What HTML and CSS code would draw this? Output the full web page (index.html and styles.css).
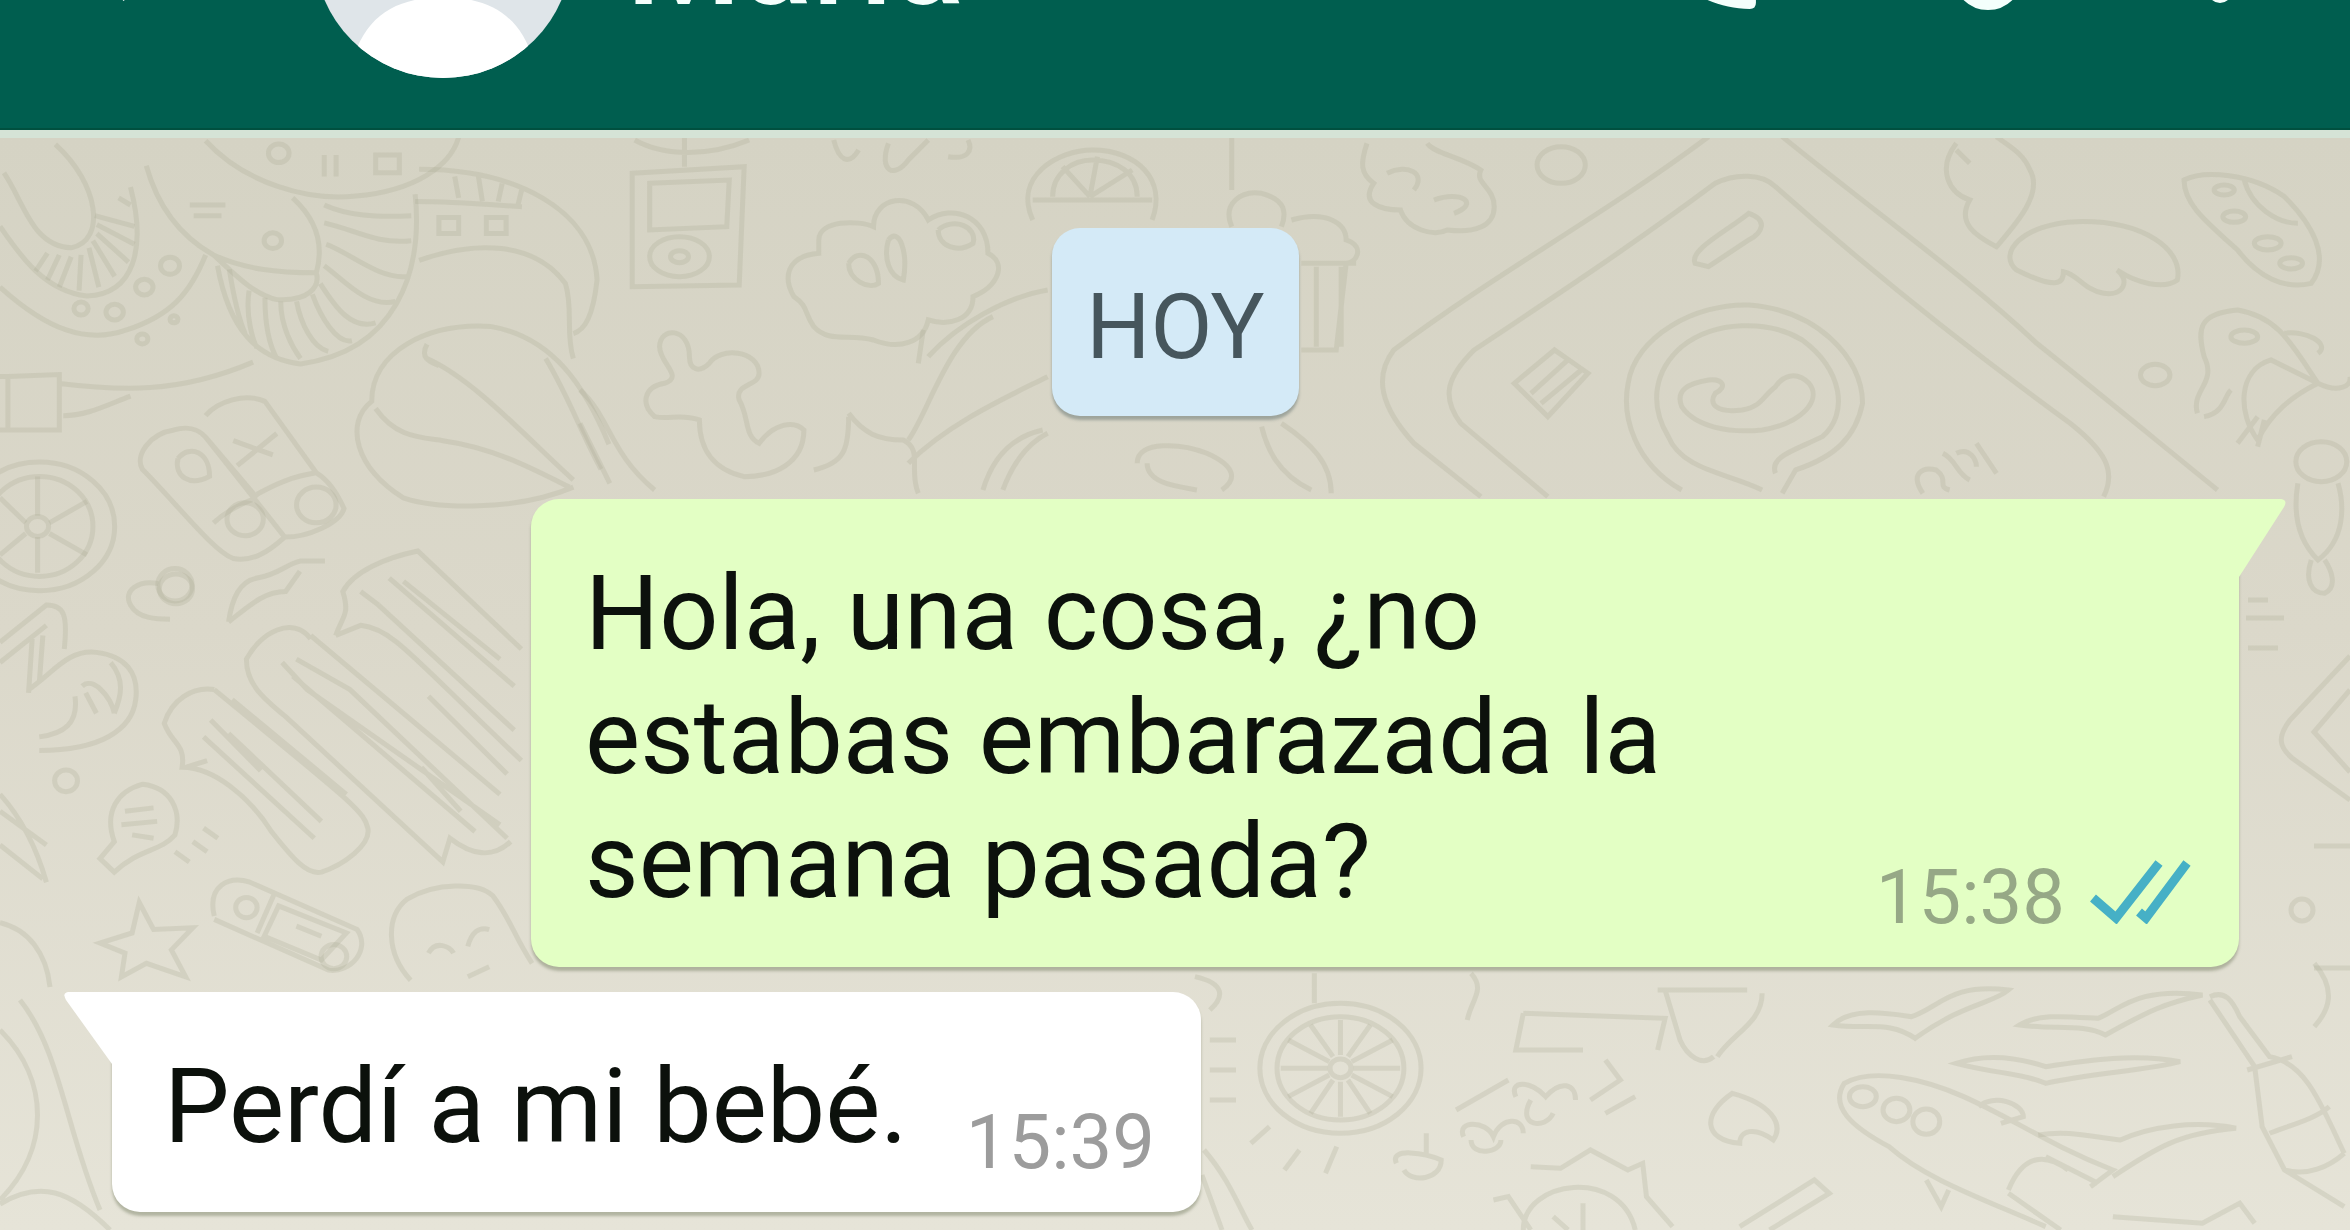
FILE: index.html
```html
<!DOCTYPE html>
<html lang="es">
<head>
<meta charset="utf-8">
<title>María</title>
<meta name="viewport" content="width=device-width, initial-scale=1">
<link rel="stylesheet" href="styles.css">
</head>
<body>
<header class="bar">
  <button class="icon-button back" aria-label="Atrás">
    <svg width="120" height="112" viewBox="0 0 120 112"><path d="M112 56H16M60 8L16 56L60 104" fill="none" stroke="currentColor" stroke-width="12"/></svg>
  </button>
  <svg class="avatar" viewBox="0 0 262 262" aria-hidden="true">
    <defs><clipPath id="round"><circle cx="131" cy="131" r="131"/></clipPath></defs>
    <g clip-path="url(#round)">
      <rect width="262" height="262" fill="#dfe5e9"/>
      <circle cx="131" cy="106" r="52" fill="#fff"/>
      <path d="M36 262C44 204 78 180 131 180S218 204 226 262Z" fill="#fff"/>
    </g>
  </svg>
  <h1 class="name">María</h1>
  <button class="icon-button call" aria-label="Llamar">
    <svg width="124" height="124" viewBox="0 0 120 120"><path d="M24 4H44Q50 4 51 10Q52 24 56 36Q58 42 54 46L42 58Q52 78 70 84L80 72Q84 68 90 70Q101 74 112 75Q118 76 118 82V112Q118 118 112 118C54 118 2 66 2 10Q2 4 8 4Z" fill="currentColor"/></svg>
  </button>
  <button class="icon-button attach" aria-label="Adjuntar">
    <svg width="84" height="128" viewBox="0 0 84 128"><path d="M70 34V90a28 28 0 0 1-56 0V28a20 20 0 0 1 40 0V84a12 12 0 0 1-24 0V34" fill="none" stroke="currentColor" stroke-width="14"/></svg>
  </button>
  <button class="icon-button more" aria-label="Más opciones">
    <svg width="32" height="120" viewBox="0 0 32 120"><g fill="currentColor"><circle cx="16" cy="18" r="12"/><circle cx="16" cy="60" r="12"/><circle cx="16" cy="102" r="12"/></g></svg>
  </button>
</header>
<main class="chat">
  <svg class="doodles" viewBox="0 138 2350 1092" preserveAspectRatio="xMidYMin slice" aria-hidden="true">
    <!-- shell, octopus, cards, balloon -->
    <g transform="translate(0 130) scale(.3954 .3571)">
      <path d="M10 120C60 200 80 325 180 330C270 310 250 150 140 40M330 160C370 330 340 460 220 465C110 450 50 350 0 270M0 440C120 560 220 600 320 560C430 520 480 460 520 350"/>
      <path d="M120 345L90 395M150 350L120 420M180 355L150 440M205 350L200 450M225 330L250 440M235 310L290 410M245 290L325 370M245 265L340 320M240 240L340 270M300 190L330 210"/>
      <circle cx="430" cy="380" r="24"/><circle cx="365" cy="440" r="22"/><circle cx="290" cy="510" r="22"/><circle cx="205" cy="500" r="18"/><circle cx="440" cy="530" r="10"/><circle cx="360" cy="585" r="14"/>
      <path d="M370 100C400 220 460 300 540 350M520 30C620 150 780 200 900 185C1050 170 1140 100 1160 20M740 190C800 250 820 320 800 400C810 440 780 480 700 475C640 460 590 400 540 350C620 390 700 400 800 400"/>
      <path d="M1050 180C1070 400 1000 620 760 655C650 640 580 560 550 380M820 210C880 240 950 245 1040 240M820 260C900 280 950 320 1040 310M825 320C880 340 960 420 1030 410M820 380C870 420 930 500 1000 480M810 430C850 500 890 560 950 540M790 460C810 520 850 600 890 590M750 480C760 540 790 610 830 620M710 480C710 550 740 610 760 640M670 470C670 540 680 600 700 640M630 450C620 520 640 590 650 610M580 390C590 460 600 520 620 570M480 210H570M490 240H560"/>
      <circle cx="705" cy="65" r="26"/><circle cx="690" cy="310" r="22"/><path d="M820 70V130M850 70V130M950 70H1010V120H950Z"/>
      <path d="M1060 110C1300 110 1500 220 1510 420C1500 520 1480 560 1450 570M1060 365C1200 310 1350 310 1430 430C1450 500 1430 570 1450 640M1150 130L1160 190M1210 130L1220 200M1270 150L1260 200M1320 165L1310 210M1050 200C1150 200 1250 210 1320 215"/>
      <rect x="1110" y="245" width="50" height="45"/><rect x="1230" y="245" width="50" height="45"/>
      <path d="M0 690H20V840H0M20 690L150 685V840H20M150 710C300 730 450 740 640 650M160 800C220 800 270 770 330 745"/>
      <path d="M520 800C550 760 620 735 670 760L800 960C830 980 850 1010 870 1060C860 1100 780 1140 720 1140C680 1180 640 1210 590 1200C540 1180 450 1050 360 950C340 910 380 850 440 840C470 830 500 835 520 860L720 1140M520 860L650 1030M650 1020C700 990 740 970 800 960M540 1100C570 1070 600 1050 650 1030M590 870L690 910M600 940L700 850"/><circle cx="620" cy="1090" r="46"/><circle cx="800" cy="1050" r="50"/><path d="M450 920C480 880 530 900 530 970C480 1000 440 970 450 920"/>
      <path d="M1450 1000C1300 1070 1100 1060 1020 1030C900 950 870 820 940 760C940 620 1080 540 1240 550C1400 580 1480 720 1540 880M1080 640C1200 700 1330 860 1450 980M950 780C1000 860 1060 860 1120 870C1250 890 1350 950 1440 1000M1380 640C1440 750 1470 850 1520 950M1080 600C1060 640 1090 650 1110 660"/>
      <ellipse cx="100" cy="1110" rx="190" ry="180"/><ellipse cx="100" cy="1110" rx="135" ry="140"/><circle cx="95" cy="1110" r="28"/><path d="M95 1080V970M125 1100L220 1040M125 1130L220 1190M95 1140V1240M65 1100L0 1030M65 1130L0 1190"/>
      <circle cx="445" cy="1285" r="42"/><path d="M400 1270C350 1260 310 1290 330 1330C350 1370 400 1370 430 1370"/>
    </g>
    <!-- photo, bubbles, cactus, cupcake -->
    <g transform="translate(580 130) scale(.4975 .3333)">
      <path d="M110 30C170 80 260 80 340 30M210 20V110M105 130L330 110L320 465L105 470ZM140 160L300 150L295 290L140 300Z"/><circle cx="200" cy="380" r="60"/><circle cx="200" cy="380" r="18"/>
      <path d="M510 30C520 90 540 110 560 60M620 40C600 120 630 150 660 90L700 30M740 80C780 90 790 60 780 30"/>
      <path d="M480 330C480 270 560 270 590 290C590 200 670 180 700 270C750 220 820 260 820 370C860 400 840 470 790 500C790 570 740 590 700 570C690 640 640 660 590 630C540 610 500 640 470 590C450 550 460 530 430 500C410 450 410 380 480 370ZM540 400C560 350 600 380 600 460C580 480 540 450 540 400M620 330C640 290 660 360 650 450C620 440 610 380 620 330M720 300C750 260 800 290 790 340C760 370 720 350 720 300"/>
      <path d="M910 270C870 140 960 60 1030 60C1120 60 1180 150 1150 270M950 200C950 130 990 90 1030 90C1080 90 1120 130 1120 200M910 210H1150M1025 200L970 110M1025 200L1040 80M1025 200L1110 120"/>
      <path d="M1310 20V180M1310 290C1290 220 1330 180 1370 190C1420 210 1420 250 1410 290M1430 270C1500 240 1540 280 1540 330C1580 350 1560 400 1540 400L1520 660H1450M1450 400H1560M1480 410V650M1530 410V650"/>
      <path d="M160 650C160 590 220 590 220 680C220 720 240 730 260 700C280 650 360 660 360 730C360 770 310 760 320 810C340 860 330 920 360 940C390 880 430 870 450 900C450 1000 390 1040 330 1040C270 1020 240 960 240 870C200 850 180 870 150 860C120 820 130 770 170 760C210 740 160 700 160 650Z"/>
      <path d="M700 680C760 580 860 500 940 480M660 930C700 850 740 620 830 560M660 1000C740 880 860 800 940 740M690 600L680 700M540 860C540 960 530 1000 470 1020M540 850C570 910 600 930 650 930C690 960 660 1020 680 1090M0 780C60 860 60 970 150 1080M0 880L60 1060"/>
      <path d="M810 1080C830 980 870 920 930 900M850 1080C870 1000 900 940 940 910M1120 1000C1120 930 1210 940 1260 970C1320 1010 1320 1050 1290 1080M1140 1000C1140 1060 1200 1070 1240 1080M1370 890C1380 950 1400 1030 1470 1080M1410 880C1470 940 1510 1000 1510 1090"/>
    </g>
    <!-- phone, clouds, rocket -->
    <g transform="translate(1300 130) scale(.6697 .3333)">
      <path d="M100 40C90 100 90 130 110 160C90 220 120 240 150 240C160 300 200 320 220 300C260 310 290 290 290 230C290 170 260 160 270 120C240 80 200 70 190 40M130 130C160 100 190 130 170 180M200 210C240 180 270 220 230 250"/><ellipse cx="390" cy="105" rx="36" ry="55"/>
      <path d="M610 20C450 260 300 420 140 660C110 740 120 830 170 940L270 1100M720 20C880 280 1000 450 1100 640C1200 800 1290 950 1370 1080M370 1100L240 880C210 800 220 740 260 660C380 500 500 340 620 160C650 130 690 130 710 170C850 420 1000 660 1150 880C1200 960 1220 1020 1200 1100"/>
      <path d="M590 400C580 360 640 300 670 250C700 270 690 310 670 330L610 410ZM320 760L380 660L430 730L370 860ZM345 790L400 690M360 820L420 720"/>
      <path d="M570 1080C500 1000 480 860 490 760C500 620 590 520 670 525C770 540 840 680 840 820C830 920 800 980 740 1020L720 1090M690 1080C640 1030 570 1020 550 920C520 820 530 720 570 650C620 570 700 570 750 630C810 720 820 850 780 920C740 960 700 980 710 1030"/>
      <path d="M610 750C580 760 560 780 570 830C590 890 640 910 690 900C750 880 780 810 760 760C740 720 720 740 710 770C690 800 690 830 660 840C620 850 610 820 620 790C640 770 630 745 610 750Z"/>
      <path d="M930 1090C910 1030 930 1010 950 1020C970 1050 950 1070 970 1080M960 970C980 990 980 1030 1000 1050M980 970C1000 950 1010 990 1010 1010M1010 940L1040 1030"/>
      <path d="M980 40C950 120 970 190 1000 210C980 280 1010 320 1040 350C1070 280 1110 190 1090 120C1080 70 1060 50 1040 20M980 60L1000 100M1070 420C1040 370 1080 280 1160 275C1260 270 1320 360 1310 450C1290 480 1250 460 1220 420C1240 450 1230 500 1200 490C1170 480 1160 430 1140 425C1140 460 1130 480 1070 420Z"/>
      <path d="M1320 150C1350 120 1420 130 1470 200C1510 280 1540 380 1510 460C1470 480 1430 440 1400 360C1350 270 1320 220 1320 150ZM1410 150C1420 230 1460 280 1490 280"/><circle cx="1380" cy="180" r="15"/><circle cx="1395" cy="260" r="17"/><circle cx="1445" cy="340" r="20"/><circle cx="1480" cy="400" r="17"/>
      <path d="M1340 850C1330 780 1370 760 1350 680C1340 600 1340 550 1400 540C1460 560 1480 640 1520 760C1480 800 1450 850 1430 930C1400 850 1400 720 1450 690L1520 760M1350 860C1380 850 1380 800 1390 780M1470 610C1500 600 1540 640 1520 670M1520 760C1550 790 1570 770 1568 740M1430 860L1400 940M1440 870L1430 950"/><circle cx="1410" cy="620" r="20"/><ellipse cx="1277" cy="735" rx="22" ry="32"/>
      <ellipse cx="1525" cy="995" rx="38" ry="60"/><path d="M1490 1060C1480 1180 1500 1250 1520 1290C1560 1230 1560 1130 1550 1060M1510 1290C1500 1350 1510 1390 1530 1390C1550 1370 1540 1320 1530 1290"/>
    </g>
    <!-- gloves, star, tags -->
    <g transform="translate(0 480) scale(.3571 .338)">
      <path d="M0 480L130 370C180 370 190 400 180 500M0 540L130 430M90 470L80 630M120 460L110 600M80 620C150 570 190 500 270 510C350 520 390 570 380 650C370 740 280 800 110 800M110 760C180 750 220 720 210 640M230 610C260 580 310 640 320 690M240 630L270 690M310 540C350 590 340 640 320 690"/>
      <path d="M640 420C650 350 670 300 720 290C780 280 800 250 840 240H910M640 420C700 370 740 330 800 330L840 270"/><circle cx="490" cy="310" r="48"/>
      <path d="M940 460C960 400 980 400 960 330C990 270 1080 230 1170 210L1460 500M940 460L1010 430C1100 440 1150 520 1460 830M1060 370L1440 740M1090 290L1440 610M1130 300L1400 530M1010 330L1060 370M1200 640L1420 870"/>
      <path d="M870 470C820 400 730 450 690 530C690 600 730 640 800 700L1240 1130L1260 1060C1320 1110 1380 1120 1430 1070M870 460L1400 930M790 540L860 620L1400 1020M830 530L980 620L1420 1060M820 580L1330 1040M1180 850L1290 980"/>
      <path d="M600 620C540 610 480 650 460 720C480 780 520 780 510 850C600 850 700 940 760 1040C820 1120 860 1170 900 1160C960 1140 1040 1080 1030 1030C1020 980 980 950 600 620M570 760L880 1060M640 750L900 1010M590 710L730 860M650 650L970 930M520 850L580 830"/>
      <circle cx="185" cy="890" r="32"/><path d="M320 1160L280 1120L320 1070C290 980 330 920 400 900C480 910 510 980 490 1050C450 1100 390 1090 320 1160ZM350 980L430 970M340 1020L440 1010M370 1050L430 1060M490 1100L530 1130M540 1070L580 1100M570 1030L610 1060M0 930C60 1000 100 1080 130 1190M0 980L130 1080M0 1080L120 1180"/>
      <path d="M390 1250L430 1330L540 1325L480 1390L520 1470L410 1430L340 1470L350 1400L280 1370L370 1340ZM600 1290C580 1200 640 1170 700 1190L1000 1330C1040 1390 980 1460 920 1450L600 1300M770 1220L720 1340M780 1260L970 1340L900 1420L740 1350ZM830 1320L900 1350"/><circle cx="690" cy="1265" r="30"/><circle cx="935" cy="1410" r="36"/>
      <path d="M1150 1480C1080 1400 1080 1290 1140 1240C1220 1190 1340 1190 1380 1230C1430 1300 1440 1350 1490 1430M1200 1400C1220 1360 1260 1380 1270 1400M1310 1380C1320 1340 1340 1320 1370 1330M1310 1470L1370 1440M0 1310C80 1330 130 1400 140 1500"/>
    </g>
    <!-- wheel, seagulls, whale, bottle -->
    <g transform="translate(1180 940) scale(.7463 .3333)">
      <ellipse cx="215" cy="385" rx="108" ry="195"/><ellipse cx="215" cy="385" rx="85" ry="155"/><ellipse cx="215" cy="385" rx="14" ry="28"/>
      <path d="M215 345V240M215 425V530M232 385H295M198 385H135M225 350L255 255M205 350L175 255M225 420L255 520M205 420L175 520M230 365L285 300M200 365L145 300M230 405L285 470M200 405L145 470"/>
      <path d="M180 100V190M390 100C410 150 390 180 385 240M20 110C60 130 60 170 40 210M40 300H75M40 390H75M40 480H75M120 560L95 610M160 630L140 690M210 620L195 700"/>
      <path d="M460 220L450 330H540M460 220L650 235L640 330M650 150L670 300C680 350 700 380 715 350M780 160C780 250 740 280 720 350M640 150H760M450 470C440 420 470 420 490 470C510 420 530 430 530 480M470 480C450 560 490 570 500 520M380 590C370 540 410 540 420 590C430 530 460 530 460 580M390 600C390 650 430 640 430 600M290 670C280 620 330 640 350 660C350 720 310 730 300 690M330 580V640M440 420L370 510M570 360L590 420L550 480M610 470L570 520"/>
      <path d="M740 460C790 490 810 550 795 600C770 560 750 570 750 610C700 600 700 520 740 460ZM420 780L440 770L470 870M470 680L510 685L550 630L600 690L620 670L625 770L660 860M460 870C460 720 590 680 610 870M500 830L520 870M540 790V870M750 860L850 720L870 760L790 870"/>
      <path d="M875 255C900 200 950 220 980 230C1020 200 1030 130 1110 150C1090 190 1050 190 985 295C950 240 920 270 875 255ZM1125 255C1150 220 1190 230 1230 235C1260 210 1280 140 1370 165C1320 190 1300 210 1240 285C1210 250 1170 270 1125 255ZM1040 370C1080 340 1120 350 1160 380C1220 360 1280 340 1340 365C1300 390 1220 400 1160 430C1130 400 1090 400 1040 370ZM1150 585C1190 570 1220 590 1260 600C1300 560 1360 540 1415 565C1340 580 1310 620 1250 710"/>
      <path d="M1160 860C1080 780 1000 720 950 620C900 560 870 500 890 430C930 380 1000 420 1050 470C1120 540 1160 610 1250 690L1220 740M1070 500C1090 460 1130 490 1130 530L1100 550M1000 720L1020 800L1030 750M1110 750C1130 640 1160 640 1190 690M1110 760L1180 870M1160 650L1230 730"/><ellipse cx="915" cy="470" rx="18" ry="30"/><ellipse cx="960" cy="510" rx="18" ry="35"/><ellipse cx="1000" cy="545" rx="18" ry="38"/>
      <path d="M1380 170C1400 150 1410 180 1420 230L1460 350C1510 370 1530 500 1560 640M1380 180L1440 380L1450 560L1480 690L1560 800M1430 390L1490 350M1460 580C1480 560 1520 540 1540 500M1480 690C1510 710 1540 680 1560 640M1520 70C1550 150 1540 210 1520 260M1250 830L1370 850L1420 790L1440 850"/>
    </g>
    <!-- edges beside and below the messages -->
    <path d="M2350 656L2290 720C2278 736 2278 746 2292 758L2350 800M2350 690L2314 732L2350 772M2248 600H2268M2246 618H2284M2248 648H2278M2314 846H2350M2314 968H2350M0 1030C50 1080 50 1150 0 1200M20 1000C60 1050 66 1130 100 1210M0 1204C40 1180 70 1190 110 1230M1204 1150C1230 1180 1240 1210 1252 1230M1202 1175L1222 1230"/>
    <circle cx="2302" cy="910" r="11"/>
  </svg>
  <time class="day">HOY</time>
  <article class="bubble sent">
    <p class="text">Hola, una cosa, ¿no<br>estabas embarazada la<br>semana pasada?</p>
    <div class="meta">
      <time class="time">15:38</time>
      <svg class="ticks" width="102" height="64" viewBox="0 0 102 64" role="img" aria-label="Leído"><path d="M4 38L27 58L70 3M50 52L57 58L98 3" fill="none" stroke="#46b0c6" stroke-width="9"/></svg>
    </div>
    <svg class="tail" width="47" height="78" viewBox="0 0 47 78" aria-hidden="true"><path d="M0 0H42Q49 1 45 8L0 78Z" fill="currentColor"/></svg>
  </article>
  <article class="bubble received">
    <p class="text">Perdí a mi bebé.</p>
    <div class="meta">
      <time class="time">15:39</time>
    </div>
    <svg class="tail" width="48" height="72" viewBox="0 0 48 72" aria-hidden="true"><path d="M48 0H4Q-2 1 2 8L48 72Z" fill="currentColor"/></svg>
  </article>
</main>
</body>
</html>
```

FILE: styles.css
```css
* {
  box-sizing: border-box;
}

body {
  display: flex;
  flex-direction: column;
  min-height: 100vh;
  margin: 0;
  overflow: hidden;
  font-family: Roboto, "Liberation Sans", sans-serif;
  background: #dcd9cb;
}

.bar {
  display: flex;
  align-items: center;
  height: 360px;
  margin-top: -230px;
  padding: 0 114px 0 68px;
  color: #f4fffc;
  background: #005e4f;
  border-bottom: 2px solid #00503f;
}

.icon-button {
  display: flex;
  padding: 0;
  border: 0;
  color: inherit;
  background: none;
}

.avatar {
  width: 258px;
  height: 258px;
  margin-left: 126px;
}

.name {
  flex: 1;
  margin: 20px 0 0 54px;
  font-size: 132px;
  line-height: 156px;
  font-weight: 500;
}

.attach {
  margin: 0 174px 0 188px;
}

.chat {
  position: relative;
  flex: 1;
  display: flex;
  flex-direction: column;
  align-items: flex-start;
  padding: 90px 111px 18px 112px;
  overflow: hidden;
  background: linear-gradient(#d5d3c4, #dbd8ca 45%, #e6e4d8);
  border-top: 8px solid #d5e3d6;
}

.doodles {
  position: absolute;
  inset: 0;
  width: 100%;
  height: 100%;
  fill: none;
  stroke: #a9ab93;
  stroke-opacity: .26;
  stroke-width: 5;
}

.doodles * {
  vector-effect: non-scaling-stroke;
}

.day {
  position: relative;
  align-self: center;
  padding: 46px 34px 34px;
  border-radius: 28px;
  font-size: 90px;
  line-height: 108px;
  color: #46565d;
  background: #d4eaf7;
  box-shadow: 0 4px 3px rgba(70, 90, 90, .4);
}

.bubble {
  position: relative;
  display: flex;
  border-radius: 28px;
  box-shadow: 0 4px 3px rgba(100, 110, 80, .4);
}

.sent {
  align-self: flex-end;
  justify-content: space-between;
  width: 82%;
  max-width: 1708px;
  margin-top: 83px;
  padding: 53px 48px 32px 54px;
  border-top-right-radius: 0;
  color: #e3ffc4;
  background: #e3ffc4;
}

.received {
  gap: 58px;
  margin-top: 25px;
  padding: 53px 46px 32px 52px;
  border-top-left-radius: 0;
  color: #fff;
  background: #fff;
}

.text {
  margin: 0;
  padding-bottom: 11px;
  font-size: 104px;
  line-height: 124px;
  color: #0c110c;
}

.meta {
  display: flex;
  align-items: flex-end;
  gap: 24px;
}

.time {
  font-size: 76px;
  line-height: 76px;
  color: #96a886;
}

.received .time {
  color: #9c9c9c;
}

.ticks {
  margin-bottom: 11px;
}

.tail {
  position: absolute;
  top: 0;
}

.sent .tail {
  left: 100%;
}

.received .tail {
  right: 100%;
}
```
